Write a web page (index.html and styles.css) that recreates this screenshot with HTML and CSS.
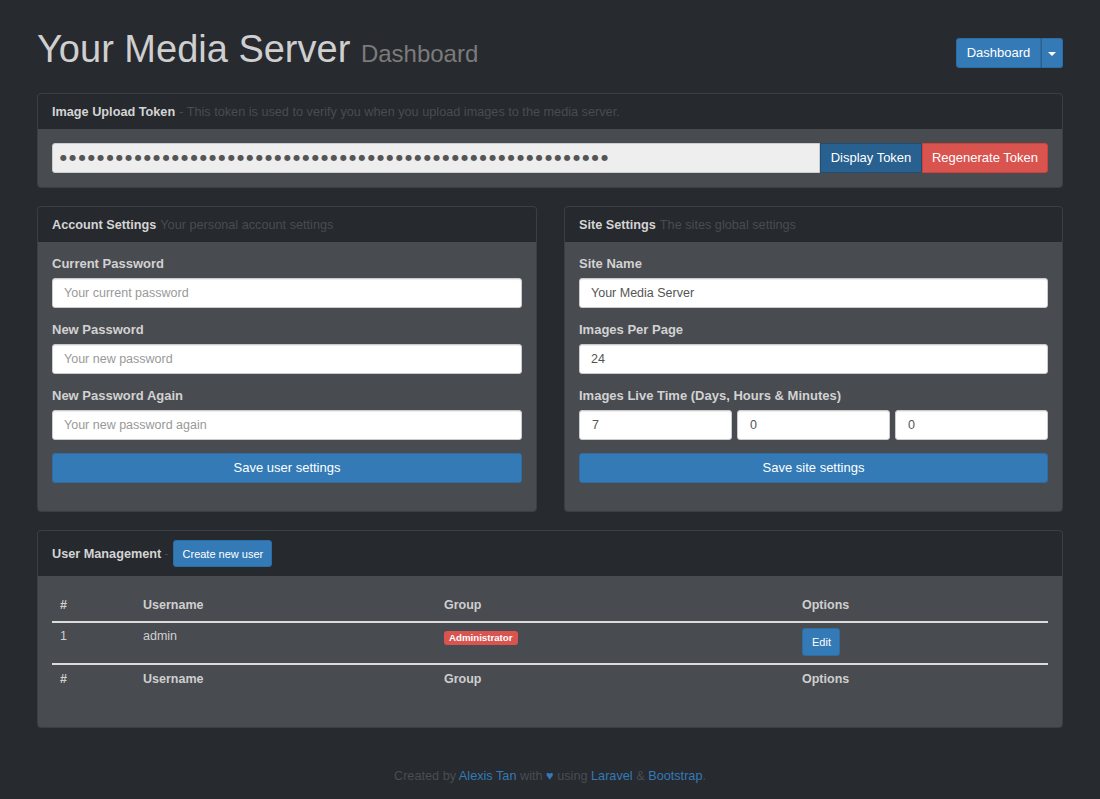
FILE: index.html
```html
<!DOCTYPE html>
<html>
<head>
<meta charset="utf-8">
<title>Your Media Server Dashboard</title>
<link rel="stylesheet" href="styles.css">
</head>
<body>
<div class="page">
  <header class="top">
    <h1 class="title">Your Media Server <small>Dashboard</small></h1>
    <div class="split">
      <button class="btn btn-primary split-main">Dashboard</button>
      <button class="btn btn-primary split-caret"><span class="caret"></span></button>
    </div>
  </header>

  <section class="panel">
    <div class="panel-heading"><strong>Image Upload Token</strong> <span class="muted">- This token is used to verify you when you upload images to the media server.</span></div>
    <div class="panel-body">
      <div class="input-group">
        <div class="token-input">●●●●●●●●●●●●●●●●●●●●●●●●●●●●●●●●●●●●●●●●●●●●●●●●●●●●●●●●●●●</div>
        <button class="btn btn-display">Display Token</button>
        <button class="btn btn-danger">Regenerate Token</button>
      </div>
    </div>
  </section>

  <div class="two-col">
    <section class="panel">
      <div class="panel-heading"><strong>Account Settings</strong> <span class="muted">Your personal account settings</span></div>
      <div class="panel-body">
        <div class="form-group">
          <label>Current Password</label>
          <div class="form-control placeholder">Your current password</div>
        </div>
        <div class="form-group">
          <label>New Password</label>
          <div class="form-control placeholder">Your new password</div>
        </div>
        <div class="form-group">
          <label>New Password Again</label>
          <div class="form-control placeholder">Your new password again</div>
        </div>
        <div class="form-group form-submit">
          <button class="btn btn-primary btn-block">Save user settings</button>
        </div>
      </div>
    </section>

    <section class="panel">
      <div class="panel-heading"><strong>Site Settings</strong> <span class="muted">The sites global settings</span></div>
      <div class="panel-body">
        <div class="form-group">
          <label>Site Name</label>
          <div class="form-control">Your Media Server</div>
        </div>
        <div class="form-group">
          <label>Images Per Page</label>
          <div class="form-control">24</div>
        </div>
        <div class="form-group">
          <label>Images Live Time (Days, Hours &amp; Minutes)</label>
          <div class="triple">
            <div class="form-control">7</div>
            <div class="form-control">0</div>
            <div class="form-control">0</div>
          </div>
        </div>
        <div class="form-group form-submit">
          <button class="btn btn-primary btn-block">Save site settings</button>
        </div>
      </div>
    </section>
  </div>

  <section class="panel">
    <div class="panel-heading heading-btn"><strong>User Management</strong> <span class="muted">-</span> <button class="btn btn-primary btn-sm">Create new user</button></div>
    <div class="panel-body">
      <table class="table">
        <thead>
          <tr><th class="c1">#</th><th class="c2">Username</th><th class="c3">Group</th><th class="c4">Options</th></tr>
        </thead>
        <tbody>
          <tr><td>1</td><td>admin</td><td><span class="label">Administrator</span></td><td><button class="btn btn-primary btn-edit">Edit</button></td></tr>
        </tbody>
        <tfoot>
          <tr><th>#</th><th>Username</th><th>Group</th><th>Options</th></tr>
        </tfoot>
      </table>
    </div>
  </section>

  <footer class="foot">Created by <a href="#">Alexis Tan</a> with <span class="heart">♥</span> using <a href="#">Laravel</a> &amp; <a href="#">Bootstrap</a>.</footer>
</div>
</body>
</html>
```

FILE: styles.css
```css
* { box-sizing: border-box; }
html, body { margin: 0; padding: 0; }
body {
  background: #272a2f;
  color: #c8c8c8;
  font-family: "Liberation Sans", Arial, sans-serif;
  font-size: 13px;
  line-height: 20px;
}
.page { padding: 0 37px; }

.top {
  display: flex;
  justify-content: space-between;
  align-items: flex-start;
  padding-top: 26px;
  height: 93px;
}
.title {
  margin: 0;
  font-size: 38px;
  line-height: 46px;
  font-weight: normal;
  color: #cfcfcf;
}
.title small { font-size: 24px; color: #7b7b7b; }

.btn {
  font-family: inherit;
  font-size: 13px;
  line-height: 20px;
  border: 1px solid transparent;
  border-radius: 3px;
  padding: 4px 12px;
  height: 30px;
  color: #fff;
  cursor: pointer;
  margin: 0;
}
.btn-primary { background: #337ab7; border-color: #2e6da4; }
.btn-danger { background: #d9534f; border-color: #d43f3a; }
.btn-display { background: #286090; border-color: #204d74; }
.btn-block { width: 100%; display: block; }

.split { display: flex; margin-top: 12px; }
.split-main { border-radius: 3px 0 0 3px; width: 85px; padding: 4px 0; }
.split-caret { border-radius: 0 3px 3px 0; width: 22px; padding: 0; border-left-color: #286090; }
.caret {
  display: inline-block;
  width: 0; height: 0;
  border-top: 4px solid #fff;
  border-left: 4px solid transparent;
  border-right: 4px solid transparent;
  vertical-align: middle;
}

.panel {
  background: #484b50;
  border: 1px solid #3b3e43;
  border-radius: 4px;
  margin-bottom: 18px;
  overflow: hidden;
}
.panel-heading {
  background: #26292e;
  padding: 7px 14px;
  height: 35px;
  color: #d4d4d4;
  display: flex;
  align-items: center;
  gap: 4px;
  white-space: nowrap;
  font-size: 12.7px;
}
.panel-heading strong { font-weight: bold; }
.muted { color: #494c52; font-size: 12.7px; }
.heading-btn { height: 45px; padding: 8px 14px; gap: 3px; }
.panel-body { padding: 14px 14px 14px; }

.input-group { display: flex; height: 30px; }
.token-input {
  flex: 1;
  background: #eeeeee;
  border: 1px solid #ccc;
  border-radius: 3px 0 0 3px;
  color: #555;
  font-family: "DejaVu Sans", sans-serif;
  font-size: 8px;
  letter-spacing: 2.35px;
  padding: 0 7px;
  line-height: 28px;
  overflow: hidden;
  white-space: nowrap;
}
.input-group .btn-display { border-radius: 0; width: 102px; padding: 4px 0; }
.input-group .btn-danger { border-radius: 0 3px 3px 0; width: 126px; padding: 4px 0; }

.two-col {
  display: grid;
  grid-template-columns: 500px 499px;
  column-gap: 27px;
}
.two-col .panel-body { padding: 13px 14px 13px; }

.form-group { margin-bottom: 13px; }
.form-submit { margin-top: 2px; margin-bottom: 15px; }
label {
  display: block;
  font-weight: bold;
  color: #d2d2d2;
  line-height: 18px;
  margin-bottom: 5px;
}
.form-control {
  height: 30px;
  background: #fff;
  border: 1px solid #ccc;
  border-radius: 3px;
  padding: 4px 11px;
  color: #555;
  font-size: 12.5px;
  line-height: 20px;
  box-shadow: inset 0 1px 1px rgba(0,0,0,0.075);
}
.placeholder { color: #999; }
.triple { display: grid; grid-template-columns: 1fr 1fr 1fr; gap: 5px; }
.triple .form-control { padding-left: 12px; }

.btn-sm { font-size: 11px; height: 27px; padding: 3px 9px; line-height: 18px; margin-left: 1px; width: 99px; }

.table { width: 100%; border-collapse: collapse; margin-bottom: 20px; font-size: 12.5px; }
.table th, .table td { text-align: left; padding: 8px; vertical-align: top; color: #cfcfcf; line-height: 20px; }
.table thead th { border-bottom: 2px solid #dcdcdc; padding-top: 5px; padding-bottom: 6px; }
.table tbody td { padding-top: 3px; padding-bottom: 7px; }
.table tfoot th { border-top: 2px solid #dcdcdc; padding-top: 4px; padding-bottom: 4px; }
.c1 { width: 83px; }
.c2 { width: 301px; }
.c3 { width: 358px; }
.label {
  display: inline-block;
  background: #d9534f;
  color: #fff;
  font-size: 9.7px;
  font-weight: bold;
  line-height: 12px;
  padding: 1px 5px;
  border-radius: 3px;
  margin-top: 5px;
  vertical-align: top;
}
.btn-edit { font-size: 11px; height: 28px; padding: 3px 9px; width: 38px; margin-top: 2px; display: block; }

.foot {
  text-align: center;
  color: #4a4d53;
  font-size: 12.7px;
  padding-top: 20px;
}
.foot a { color: #337ab7; text-decoration: none; }
.heart { color: #337ab7; }
```
